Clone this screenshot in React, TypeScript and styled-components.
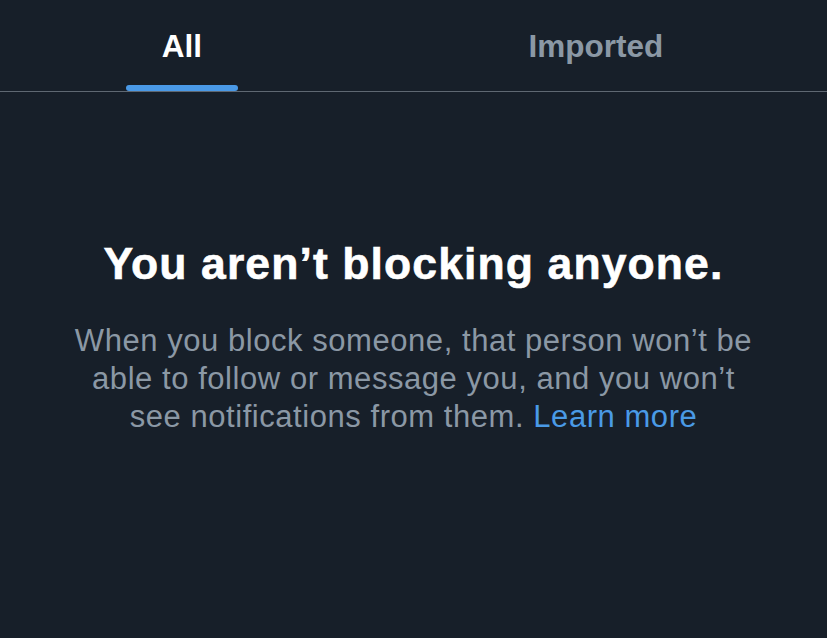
import React, { useState } from "react";
import styled, { createGlobalStyle } from "styled-components";

const GlobalStyle = createGlobalStyle`
  html, body {
    margin: 0;
    padding: 0;
    background: #171f29;
    overflow: hidden;
  }
  body {
    font-family: "Liberation Sans", Arial, sans-serif;
    -webkit-font-smoothing: antialiased;
  }
`;

const Page = styled.div`
  width: 827px;
  height: 638px;
  background: #171f29;
  overflow: hidden;
`;

const TabBar = styled.nav`
  border-bottom: 1px solid #5f6872;
  overflow: hidden;
`;

const TabList = styled.div`
  display: grid;
  grid-template-columns: 1fr 1fr;
  width: 828px;
  margin-left: -25px;
`;

const Tab = styled.button<{ $active: boolean }>`
  display: flex;
  flex-direction: column;
  align-items: center;
  height: 91px;
  padding: 28px 0 0;
  border: none;
  background: transparent;
  cursor: pointer;
  font-family: "Liberation Sans", Arial, sans-serif;
  font-weight: 700;
  font-size: 31.5px;
  line-height: 36px;
  color: ${(p) => (p.$active ? "#ffffff" : "#8b98a5")};
`;

const TabLabel = styled.span`
  display: block;
  height: 36px;
`;

const Indicator = styled.span<{ $active: boolean }>`
  display: block;
  margin-top: 21px;
  width: 112px;
  height: 6px;
  border-radius: 3px;
  background: ${(p) => (p.$active ? "#4a99e6" : "transparent")};
`;

const Empty = styled.section`
  display: flex;
  flex-direction: column;
  align-items: center;
  text-align: center;
  padding-top: 146px;
`;

const Title = styled.h1`
  margin: 0;
  font-family: "Liberation Sans", Arial, sans-serif;
  font-weight: 700;
  font-size: 44.5px;
  line-height: 52px;
  letter-spacing: 1.1px;
  color: #ffffff;
  -webkit-text-stroke: 0.6px #ffffff;
`;

const Message = styled.p`
  margin: 32px 0 0;
  max-width: 690px;
  font-family: "Liberation Sans", Arial, sans-serif;
  font-weight: 400;
  font-size: 31px;
  line-height: 38px;
  letter-spacing: 0.55px;
  color: #8b98a5;
`;

const Link = styled.a`
  color: #4a9ae6;
  text-decoration: none;
`;

export default function App() {
  const [tab, setTab] = useState(0);
  const tabs = ["All", "Imported"];
  return (
    <Page>
      <GlobalStyle />
      <TabBar>
        <TabList>
          {tabs.map((t, i) => (
            <Tab key={t} $active={tab === i} onClick={() => setTab(i)}>
              <TabLabel>{t}</TabLabel>
              <Indicator $active={tab === i} />
            </Tab>
          ))}
        </TabList>
      </TabBar>
      <Empty>
        <Title>You aren’t blocking anyone.</Title>
        <Message>
          When you block someone, that person won’t be able to follow or
          message you, and you won’t see notifications from them.{" "}
          <Link href="#">Learn more</Link>
        </Message>
      </Empty>
    </Page>
  );
}
